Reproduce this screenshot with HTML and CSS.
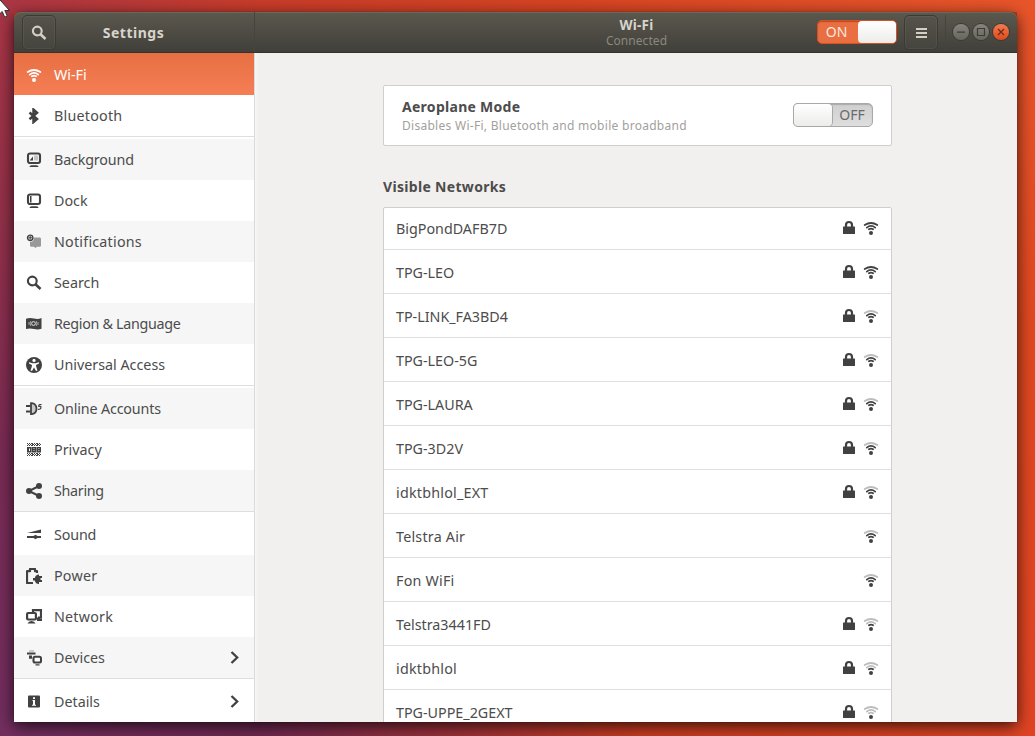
FILE: index.html
```html
<!DOCTYPE html>
<html lang="en-GB">
<head>
<meta charset="utf-8">
<title>Settings</title>
<link rel="stylesheet" href="styles.css">
</head>
<body>
<svg class="defs" aria-hidden="true">
<symbol id="wifi" viewBox="0 0 16 16"><g fill="none" stroke="currentColor" stroke-width="1.75" stroke-linecap="round"><path d="M1.7 5Q8 1 14.3 5"/><path d="M3.8 7.600Q8 4.200 12.200 7.600"/><path d="M5.900 9.300Q8 7.800 10.100 9.300"/></g><circle cx="8" cy="12.900" r="2" fill="currentColor"/></symbol>
<symbol id="wifi3" viewBox="0 0 16 16"><g fill="none" stroke="currentColor" stroke-width="1.75" stroke-linecap="round"><path opacity=".35" d="M1.700 5Q8 1 14.300 5"/><path d="M3.800 7.600Q8 4.200 12.200 7.600"/><path d="M5.900 9.300Q8 7.800 10.100 9.300"/></g><circle cx="8" cy="12.900" r="2" fill="currentColor"/></symbol>
<symbol id="wifi2" viewBox="0 0 16 16"><g fill="none" stroke="currentColor" stroke-width="1.75" stroke-linecap="round"><path opacity=".35" d="M1.700 5Q8 1 14.300 5M3.800 7.600Q8 4.200 12.200 7.600"/><path d="M5.900 9.300Q8 7.800 10.100 9.300"/></g><circle cx="8" cy="12.900" r="2" fill="currentColor"/></symbol>
<symbol id="wifi1" viewBox="0 0 16 16"><g fill="none" stroke="currentColor" stroke-width="1.75" stroke-linecap="round" opacity=".35"><path d="M1.700 5Q8 1 14.300 5M3.800 7.600Q8 4.200 12.200 7.600M5.900 9.300Q8 7.800 10.100 9.300"/></g><circle cx="8" cy="12.900" r="2" fill="currentColor"/></symbol>
<symbol id="lock" viewBox="0 0 16 16"><rect x="2" y="6.500" width="12" height="7.500" rx=".6" fill="currentColor"/><path d="M5 8V5a3 3 0 0 1 6 0v3" fill="none" stroke="currentColor" stroke-width="2.200"/></symbol>
<symbol id="search" viewBox="0 0 16 16"><g fill="none" stroke="currentColor"><circle cx="6.300" cy="6" r="4.400" stroke-width="2.100"/><path d="M9.500 9.200L14.500 14" stroke-width="2.600"/></g></symbol>
<symbol id="bluetooth" viewBox="0 0 16 16"><path d="M3.500 4.500L11 11 7.500 14V1.600L11 4.700 3.500 11.200" fill="none" stroke="currentColor" stroke-width="2.500"/></symbol>
<symbol id="background" viewBox="0 0 16 16"><rect x="2" y="1.500" width="12" height="9.500" rx="2" fill="none" stroke="currentColor" stroke-width="2.100"/><path d="M8 3.500h4v5H8z" fill="#c4c4c4"/><path d="M4 8L7 4.500v4H4z" fill="currentColor"/><path d="M3.500 15q0-1.800 2-1.800h5q2 0 2 1.800z" fill="currentColor"/></symbol>
<symbol id="dock" viewBox="0 0 16 16"><rect x="2" y="1.500" width="12" height="9.500" rx="2" fill="none" stroke="currentColor" stroke-width="2.100"/><path d="M4 3h1.500v6.500H4z" fill="currentColor"/><path d="M3.500 15q0-1.800 2-1.800h5q2 0 2 1.800z" fill="currentColor"/></symbol>
<symbol id="notifications" viewBox="0 0 16 16"><path d="M8 3.500h6l1 1v7.500l-1 .8h-3L9.500 14l-1.500-1.200H5L4 12V8Q8 8 8 3.500z" fill="#999"/><circle cx="4.200" cy="3.800" r="2.700" fill="none" stroke="currentColor" stroke-width="1.400"/><path d="M4.200 2v3.600M2.400 3.800H6" stroke="currentColor"/></symbol>
<symbol id="region" viewBox="0 0 16 16"><path d="M0 2.700Q4 1.500 8 2.600t7.500-.5v10.700Q12 14 8 13.100T0 13z" fill="currentColor"/><g fill="none" stroke="#eee" stroke-width=".9"><circle cx="7.500" cy="7.500" r="1.900"/><path d="M4.800 5q-1.300 2.500 0 5M10.200 5q1.300 2.500 0 5M3 6v3M12 6v3" stroke-opacity=".65"/></g></symbol>
<symbol id="access" viewBox="0 0 16 16"><circle cx="8" cy="8" r="8" fill="currentColor"/><circle cx="8" cy="3.400" r="1.600" fill="#fff"/><path d="M3 5.200l3.500 1.100h3L13 5.200v1.400L10 8l.3 2 1.200 3.600-1.500.3L8 10.500 6 13.900l-1.500-.3L5.700 10 6 8 3 6.600z" fill="#fff"/></symbol>
<symbol id="accounts" viewBox="0 0 16 16"><path d="M5 2.200h1q4.500 1 4.500 5.500T6 13.200H5z" fill="#c8c8c8" stroke="currentColor" stroke-width="1.800"/><path d="M0 5h4.500M0 10.400h4.500" stroke="currentColor" stroke-width="2"/><path d="M15.600 3.500h-2q-1 .4-.8 1.800h1.900q.6 1.900-.7 2.700l-2 .5" fill="none" stroke="currentColor" stroke-width="1.200"/></symbol>
<symbol id="privacy" viewBox="0 0 16 16"><g stroke="currentColor" stroke-dasharray="1 1 1 1 1 0"><path d="M1 1.500h14M2 2.500h13M1 3.500h14M1 11.500h14M2 12.500h13M1 13.500h14"/></g><g fill="none" stroke="currentColor" stroke-width="1.400"><path d="M1.700 5.700h3v4h-3zM6.500 5.700h3v4h-3zM11.300 5.700h3v4h-3z"/><path d="M2.300 6v4M7 7.700h2M12 7.700h2"/></g></symbol>
<symbol id="sharing" viewBox="0 0 16 16"><path d="M13 3L3 8l10 5" fill="none" stroke="currentColor" stroke-width="2"/><circle cx="3" cy="8" r="3" fill="currentColor"/><circle cx="13" cy="3" r="3" fill="currentColor"/><circle cx="13" cy="13" r="3" fill="currentColor"/></symbol>
<symbol id="sound" viewBox="0 0 16 16"><path d="M1.200 6L15 2.500V6z" fill="currentColor"/><path d="M1 10h14" stroke="currentColor" stroke-width="2"/><path d="M7.500 9l2-1.300 2 1.300v2l-2 1.300-2-1.300z" fill="currentColor"/></symbol>
<symbol id="power" viewBox="0 0 16 16"><path d="M11 5V3.200H9V1H4v2.200H1V15h6" fill="none" stroke="currentColor" stroke-width="2.200" stroke-linejoin="round"/><path d="M7 10h1.800Q9.500 6.500 13 6.500V8h3v2h-1.500v2H16v2h-3v2Q9.500 16 8.800 12.500H7z" fill="currentColor"/></symbol>
<symbol id="network" viewBox="0 0 16 16"><path d="M7 3V1.200h8v7.500h-3" fill="none" stroke="currentColor" stroke-width="2.200"/><rect x="1.100" y="4" width="8.800" height="6.500" rx="1" fill="#fff" stroke="currentColor" stroke-width="2.200"/><path d="M1.500 14.500q1-2.500 4-2.500t4 2.500zM11 8.500h3V10h2v2h-5z" fill="currentColor"/></symbol>
<symbol id="devices" viewBox="0 0 16 16"><path d="M3 0h5v2H3z" fill="#ccc"/><path d="M1 2.500h8.500v2H1zM3 5.500h3v3.300H3zM9.500 14.200h4v1.300h-4z" fill="currentColor"/><rect x="7.500" y="6.800" width="7.500" height="5.700" rx="1.500" fill="#fff" stroke="currentColor" stroke-width="2.100"/></symbol>
<symbol id="details" viewBox="0 0 16 16"><rect x="2" y="1.500" width="12" height="12" rx="1" fill="currentColor"/><path d="M7 3.300h2v1.700H7zM6.500 6H9v4.700h1v1H6v-1h1V7h-.5z" fill="#fff"/></symbol>
<symbol id="chevron" viewBox="0 0 16 16"><path d="M5.500 2L11.200 7.500 5.500 13" fill="none" stroke="currentColor" stroke-width="2.300"/></symbol>
</svg>

<div class="window">
  <header class="titlebar">
    <div class="titlebar-side">
      <button class="tool"><svg class="icon"><use href="#search"/></svg></button>
      <h1 class="app-title">Settings</h1>
    </div>
    <div class="titlebar-main">
      <div class="heading"><strong>Wi-Fi</strong><span>Connected</span></div>
      <div class="controls">
        <div class="switch on"><span class="state">ON</span><span class="knob"></span></div>
        <button class="tool menu"><i></i><i></i><i></i></button>
        <div class="window-buttons">
          <svg class="wb" viewBox="0 0 16 16"><path d="M4 8.200h8"/></svg>
          <svg class="wb" viewBox="0 0 16 16"><path d="M4.500 4.500h7v7h-7z"/></svg>
          <svg class="wb close" viewBox="0 0 16 16"><path d="M5 5l6 6M11 5l-6 6"/></svg>
        </div>
      </div>
    </div>
  </header>
  <div class="body">
    <nav class="sidebar">
      <a class="item active"><svg class="icon"><use href="#wifi"/></svg><span>Wi-Fi</span></a>
      <a class="item"><svg class="icon"><use href="#bluetooth"/></svg><span class="wide">Bluetooth</span></a>
      <hr>
      <a class="item alt"><svg class="icon"><use href="#background"/></svg><span class="snug">Background</span></a>
      <a class="item"><svg class="icon"><use href="#dock"/></svg><span>Dock</span></a>
      <a class="item alt"><svg class="icon"><use href="#notifications"/></svg><span class="wide">Notifications</span></a>
      <a class="item"><svg class="icon"><use href="#search"/></svg><span>Search</span></a>
      <a class="item alt"><svg class="icon"><use href="#region"/></svg><span class="tight">Region &amp; Language</span></a>
      <a class="item"><svg class="icon"><use href="#access"/></svg><span>Universal Access</span></a>
      <hr>
      <a class="item alt"><svg class="icon"><use href="#accounts"/></svg><span class="snug">Online Accounts</span></a>
      <a class="item"><svg class="icon"><use href="#privacy"/></svg><span>Privacy</span></a>
      <a class="item alt"><svg class="icon"><use href="#sharing"/></svg><span class="tight">Sharing</span></a>
      <hr>
      <a class="item"><svg class="icon"><use href="#sound"/></svg><span class="snug">Sound</span></a>
      <a class="item alt"><svg class="icon"><use href="#power"/></svg><span class="wide">Power</span></a>
      <a class="item"><svg class="icon"><use href="#network"/></svg><span class="wide">Network</span></a>
      <a class="item alt"><svg class="icon"><use href="#devices"/></svg><span>Devices</span><svg class="icon more"><use href="#chevron"/></svg></a>
      <hr>
      <a class="item"><svg class="icon"><use href="#details"/></svg><span>Details</span><svg class="icon more"><use href="#chevron"/></svg></a>
    </nav>
    <main class="content">
      <section class="card aeroplane">
        <div class="card-text"><strong>Aeroplane Mode</strong><span>Disables Wi-Fi, Bluetooth and mobile broadband</span></div>
        <div class="switch off"><span class="knob"></span><span class="state">OFF</span></div>
      </section>
      <h2 class="section-title">Visible Networks</h2>
      <ul class="card networks">
        <li><span>BigPondDAFB7D</span><svg class="icon"><use href="#lock"/></svg><svg class="icon"><use href="#wifi"/></svg></li>
        <li><span>TPG-LEO</span><svg class="icon"><use href="#lock"/></svg><svg class="icon"><use href="#wifi"/></svg></li>
        <li><span>TP-LINK_FA3BD4</span><svg class="icon"><use href="#lock"/></svg><svg class="icon"><use href="#wifi3"/></svg></li>
        <li><span>TPG-LEO-5G</span><svg class="icon"><use href="#lock"/></svg><svg class="icon"><use href="#wifi3"/></svg></li>
        <li><span>TPG-LAURA</span><svg class="icon"><use href="#lock"/></svg><svg class="icon"><use href="#wifi3"/></svg></li>
        <li><span>TPG-3D2V</span><svg class="icon"><use href="#lock"/></svg><svg class="icon"><use href="#wifi3"/></svg></li>
        <li><span class="wide">idktbhlol_EXT</span><svg class="icon"><use href="#lock"/></svg><svg class="icon"><use href="#wifi3"/></svg></li>
        <li><span class="wide">Telstra Air</span><svg class="icon"><use href="#wifi3"/></svg></li>
        <li><span class="wide">Fon WiFi</span><svg class="icon"><use href="#wifi3"/></svg></li>
        <li><span>Telstra3441FD</span><svg class="icon"><use href="#lock"/></svg><svg class="icon"><use href="#wifi2"/></svg></li>
        <li><span class="wide">idktbhlol</span><svg class="icon"><use href="#lock"/></svg><svg class="icon"><use href="#wifi2"/></svg></li>
        <li><span>TPG-UPPE_2GEXT</span><svg class="icon"><use href="#lock"/></svg><svg class="icon"><use href="#wifi1"/></svg></li>
      </ul>
    </main>
  </div>
</div>
<svg class="cursor" viewBox="0 0 12 20"><path d="M-3.500-4L9.500 10.500H4.800L7.300 16l-2.600 1.200L2.200 11.500-1 14.500z" fill="#fff" stroke="#333" stroke-width="1"/></svg>
</body>
</html>
```
FILE: styles.css
```css
* { box-sizing: border-box; }
body {
  margin: 0;
  width: 1035px;
  height: 736px;
  overflow: hidden;
  padding: 12px 18px 14px 14px;
  font: 14.3px/20px "Noto Sans", "Open Sans", sans-serif;
  color: #4c4c4c;
  background:
    linear-gradient(90deg, #aa3645, #c83c2a 25%, #d64422 55%, #e8552b) 0 0 / 100% 12px no-repeat,
    linear-gradient(180deg, #a83545, #91304a 30%, #7a2b54 60%, #722e60) 0 12px / 14px 100% no-repeat,
    linear-gradient(90deg, #722e60, #6e2850 25%, #98303a 42%, #c83c20 62%, #e04424) 0 100% / 100% 14px no-repeat,
    linear-gradient(180deg, #e8552b, #e04820 45%, #e04424) 100% 0 / 18px 100% no-repeat,
    #c83c20;
}
.defs { position: absolute; width: 0; height: 0; }
.cursor { position: absolute; left: 0; top: 0; width: 12px; height: 20px; }
.icon { width: 16px; height: 16px; flex: none; display: block; color: #414141; }
.window {
  height: 710px;
  display: flex;
  flex-direction: column;
  border-radius: 7px 7px 0 0;
  box-shadow: 0 0 1px rgba(0, 0, 0, .6), 0 4px 16px rgba(0, 0, 0, .75);
}
.titlebar {
  height: 41px;
  flex: none;
  display: flex;
  color: #d8d4cc;
  background: linear-gradient(#5b584e, #403f3a);
  border-radius: 7px 7px 0 0;
  border-bottom: 1px solid #34332f;
  box-shadow: inset 0 1px #6a675d;
}
.titlebar-side {
  width: 241px;
  display: grid;
  grid-template-columns: 34px 1fr 34px;
  align-items: start;
  padding: 3px 9px 0 8px;
  border-right: 1px solid #45443e;
}
.titlebar-main {
  flex: 1;
  display: grid;
  grid-template-columns: 1fr auto 1fr;
  padding-left: 1px;
}
.tool {
  width: 34px;
  height: 35px;
  padding: 0;
  display: flex;
  flex-direction: column;
  align-items: center;
  justify-content: center;
  border: 1px solid #3b3a35;
  border-radius: 5px;
  background: linear-gradient(#55534a, #45443e);
  box-shadow: inset 0 0 0 1px rgba(255, 255, 255, .05);
}
.tool .icon { color: #d3cfc5; }
.app-title { margin: 8px 0 0; font-size: 14px; line-height: 20px; text-align: center; letter-spacing: .53px; }
.heading { grid-column: 2; display: flex; flex-direction: column; align-items: center; padding-top: 4px; }
.heading strong { font-size: 13.5px; line-height: 18px; letter-spacing: .2px; }
.heading span { font-size: 12px; line-height: 14px; color: #8b887f; letter-spacing: .05px; }
.controls { display: flex; justify-content: flex-end; align-items: flex-start; padding: 3px 8px 0 0; }
.menu { gap: 2px; margin: 0 7px; }
.menu i { width: 11px; height: 2px; background: #d3cfc5; }
.window-buttons { display: flex; gap: 4px; padding: 9px 0 0 7px; height: 36px; border-left: 1px solid #45443e; }
.wb { width: 16px; height: 16px; border-radius: 50%; background: linear-gradient(#85837b, #67655e); box-shadow: 0 0 0 1px #3b3a35; fill: none; stroke: #3d3c37; stroke-width: 1.2; }
.close { background: linear-gradient(#f47a52, #df4a1c); stroke: #6b2a14; }
.switch { width: 80px; height: 24px; display: flex; border-radius: 5px; border: 1px solid; font-size: 14px; line-height: 22px; }
.switch .state { flex: 1; text-align: center; }
.knob { width: 38px; height: 22px; border-radius: 4px; background: linear-gradient(#fff, #ececea); }
.on { margin-top: 5px; color: #fbe6dd; border-color: #d9501f; background: #e96f43; box-shadow: inset 0 1px 1px #b84a24; }
.on .state { padding-right: 3px; }
.off { margin: -2px 1px 0 0; color: #6a6a6a; border-color: #a8a8a8; background: linear-gradient(#cfcfcf, #dedede); box-shadow: inset 0 1px 1px #aaa; }
.off .knob { box-shadow: 0 0 0 1px #a8a8a8; }
.body { flex: 1; min-height: 0; display: flex; }
.sidebar { width: 241px; background: #fff; border-right: 1px solid #dadada; }
.item { height: 41px; display: flex; align-items: center; padding: 0 12px; gap: 12px; }
.item span { flex: 1; white-space: nowrap; padding-top: 1px; }
.wide { letter-spacing: .22px; }
.snug { letter-spacing: -.15px; }
.tight { letter-spacing: -.3px; }
.alt { background: #f6f6f6; }
.active { height: 42px; padding-top: 1px; color: #fff; background: linear-gradient(#e76f43, #f57e55); }
.active .icon { color: #fff; }
.sidebar hr { height: 3px; margin: 0; border: 0; border-top: 1px solid #dedede; background: #fff; }
.content { flex: 1; overflow: hidden; background: linear-gradient(90deg, #f7f7f6, #f1f0ee 3px); padding: 32px 125px 0 128px; }
.card { background: #fff; border: 1px solid #d0cfcd; border-radius: 2px; }
.aeroplane { height: 61px; width: 509px; display: flex; align-items: center; justify-content: space-between; padding: 0 17px 0 18px; }
.card-text { display: flex; flex-direction: column; }
.card-text strong { font-size: 14px; line-height: 20px; letter-spacing: .28px; }
.card-text span { font-size: 12px; line-height: 18px; color: #a3a09c; letter-spacing: .28px; }
.section-title { margin: 31px 0 10px; font-size: 14px; line-height: 20px; letter-spacing: .32px; }
.networks { list-style: none; width: 509px; margin: 0; padding: 0; }
.networks li { height: 44px; display: flex; align-items: center; padding: 0 12px; gap: 6px; box-shadow: inset 0 -1px #dfdfdf; }
.networks li:first-child { height: 42px; padding-bottom: 2px; }
.networks span { flex: 1; padding-top: 2px; }
```
